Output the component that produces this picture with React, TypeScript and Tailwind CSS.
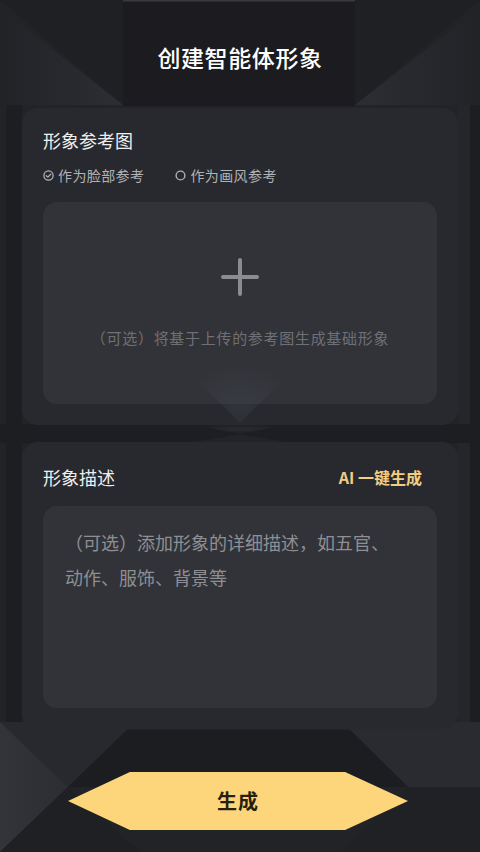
const font = { fontFamily: '"Noto Sans CJK SC", "Noto Sans", sans-serif' };

function Backdrop() {
  return (
    <svg className="absolute inset-0 pointer-events-none" width="480" height="852" viewBox="0 0 480 852">
      <defs>
        <linearGradient id="tl" x1="0" y1="0" x2="1" y2="0">
          <stop offset="0" stopColor="#222327" />
          <stop offset="1" stopColor="#2d2e33" />
        </linearGradient>
        <linearGradient id="tr" x1="1" y1="0" x2="0" y2="0">
          <stop offset="0" stopColor="#222327" />
          <stop offset="1" stopColor="#2d2e33" />
        </linearGradient>
        <linearGradient id="bl" x1="0" y1="0" x2="1" y2="0">
          <stop offset="0" stopColor="#333439" />
          <stop offset="1" stopColor="#2c2d32" />
        </linearGradient>
        <radialGradient id="mid" cx="0.5" cy="0.5" r="0.5">
          <stop offset="0" stopColor="#303237" />
          <stop offset="1" stopColor="#1d1e22" />
        </radialGradient>
      </defs>
      <rect width="480" height="852" fill="#222327" />
      {/* top bevel */}
      <polygon points="0,0 123,0 123,105" fill="#1f2024" />
      <polygon points="0,8 123,105 0,105" fill="url(#tl)" />
      <polygon points="480,0 355,0 355,105" fill="#1f2024" />
      <polygon points="480,8 355,105 480,105" fill="url(#tr)" />
      <rect x="123" y="0" width="232" height="106" fill="#1c1c20" />
      <rect x="123" y="0" width="232" height="1.5" fill="#38393e" />
      {/* side strips */}
      <rect x="6" y="105" width="16" height="625" fill="#1d1e22" />
      <rect x="458" y="105" width="12" height="625" fill="#25262a" />
      <rect x="470" y="105" width="10" height="625" fill="#1d1e22" />
      {/* gap between cards */}
      <rect x="0" y="424" width="480" height="19" fill="#1d1e22" />
      <polygon points="190,424 290,424 240,434" fill="url(#mid)" opacity="0.7" />
      <polygon points="190,443 290,443 240,434" fill="#232428" />
      {/* bottom bevel */}
      <polygon points="0,722 127,722 127,730 68,787" fill="#28292e" />
      <polygon points="0,722 68,787 0,852" fill="url(#bl)" />
      <polygon points="68,787 140,852 0,852" fill="#1f2024" />
      <polygon points="480,722 350,722 350,730 408,787 480,787" fill="#2a2b30" />
      <polygon points="408,787 480,787 480,852 340,852" fill="#202125" />
      <polygon points="127,730 350,730 408,787 68,787" fill="#1c1d21" />
    </svg>
  );
}

export default function App() {
  return (
    <div className="relative w-[480px] h-[852px] overflow-hidden bg-[#222327]" style={font}>
      <Backdrop />
      <div className="relative z-10 flex flex-col">
        <header className="h-[108px] pt-[6px] flex items-center justify-center">
          <h1 className="text-[23px] font-medium text-white tracking-[0.6px]">创建智能体形象</h1>
        </header>

        <section className="mx-[22px] h-[317px] rounded-[16px] bg-[#28292e] px-[21px] pt-[19px] relative overflow-hidden">
          <h2 className="text-[18px] leading-[26px] text-[#eeeeee]">形象参考图</h2>
          <div className="mt-[12px] flex items-center gap-[31px] text-[14px] leading-[20px] text-[#b1b2b6] tracking-[0.4px]">
            <span className="flex items-center gap-[4px]">
              <svg width="11" height="11" viewBox="0 0 12 12" fill="none" stroke="#b1b2b6" strokeWidth="1.4">
                <circle cx="6" cy="6" r="5" />
                <path d="M3.6 6.2 L5.3 7.8 L8.4 4.6" strokeLinecap="round" strokeLinejoin="round" />
              </svg>
              作为脸部参考
            </span>
            <span className="flex items-center gap-[4px]">
              <svg width="11" height="11" viewBox="0 0 12 12" fill="none" stroke="#b1b2b6" strokeWidth="1.5">
                <circle cx="6" cy="6" r="4.8" />
              </svg>
              作为画风参考
            </span>
          </div>
          <div className="mt-[17px] h-[202px] rounded-[14px] bg-[#323338] flex flex-col items-center pt-[56px]">
            <svg width="38" height="38" viewBox="0 0 38 38" stroke="#8b8c90" strokeWidth="4" strokeLinecap="round">
              <path d="M19 2 V36 M2 19 H36" />
            </svg>
            <p className="mt-[31px] text-[15px] leading-[22px] text-[#6f7075] tracking-[0.7px]">（可选）将基于上传的参考图生成基础形象</p>
          </div>
          <div className="absolute left-1/2 -translate-x-1/2 bottom-[2px] w-[120px] h-[60px] bg-[radial-gradient(ellipse_at_50%_70%,rgba(78,84,100,0.25),transparent_70%)] [clip-path:polygon(0_0,100%_0,50%_100%)]" />
        </section>

        <section className="mt-[17px] mx-[22px] h-[287px] rounded-[16px] bg-[#28292e] px-[21px] pt-[22px]">
          <div className="flex items-center justify-between">
            <h2 className="text-[18px] leading-[26px] text-[#eeeeee]">形象描述</h2>
            <button className="mr-[15px] text-[16px] leading-[26px] font-bold text-[#f3cd82]">AI 一键生成</button>
          </div>
          <div className="mt-[16px] h-[202px] rounded-[14px] bg-[#323338] pl-[22px] pr-[42px] pt-[19px] text-[18px] leading-[35px] text-[#8e8f94]">
            （可选）添加形象的详细描述，如五官、动作、服饰、背景等
          </div>
        </section>
      </div>

      <div className="absolute left-[68px] top-[772px] z-20 w-[340px] h-[58px] flex items-center justify-center bg-[#fdd67c] [clip-path:polygon(18.2%_0,81.5%_0,100%_50%,81.5%_100%,18.2%_100%,0_50%)]">
        <span className="text-[20px] font-bold text-[#2a1e0c] tracking-[1px]">生成</span>
      </div>
    </div>
  );
}
